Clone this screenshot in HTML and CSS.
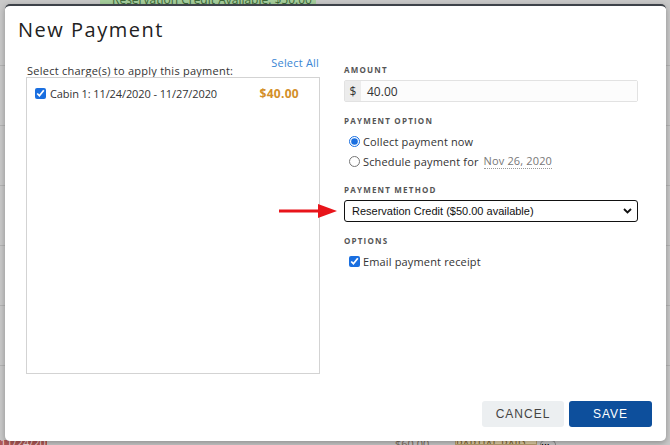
FILE: index.html
```html
<!DOCTYPE html>
<html>
<head>
<meta charset="utf-8">
<link rel="stylesheet" href="styles.css">
</head>
<body>
<div class="page">
  <div class="bg-top">
    <div class="credit-banner">Reservation Credit Available: $50.00</div>
  </div>
  <div class="bg-rows">
    <div class="bg-row"></div>
    <div class="bg-row"></div>
    <div class="bg-row"></div>
    <div class="bg-row"></div>
    <div class="bg-row"></div>
    <div class="bg-row"></div>
  </div>
  <div class="bg-bottom">
    <span class="red-badge">11/24/2020</span>
    <span class="bg-amount">$60.00</span>
    <span class="partial">PARTIAL PAID</span>
    <span class="dots">···</span>
  </div>

  <div class="modal">
    <h1 class="modal-title">New Payment</h1>
    <div class="modal-body">
      <div class="col-left">
        <div class="charges-head">
          <span class="charges-label">Select charge(s) to apply this payment:</span>
          <a class="select-all">Select All</a>
        </div>
        <div class="charges-box">
          <label class="charge">
            <input type="checkbox" class="cb" checked>
            <span class="charge-name">Cabin 1: 11/24/2020 - 11/27/2020</span>
            <span class="charge-amt">$40.00</span>
          </label>
        </div>
      </div>
      <div class="col-right">
        <div class="field">
          <div class="flabel">AMOUNT</div>
          <div class="input-group">
            <span class="addon">$</span>
            <span class="input">40.00</span>
          </div>
        </div>
        <div class="field">
          <div class="flabel">PAYMENT OPTION</div>
          <label class="opt"><input type="radio" name="po" class="rd" checked> Collect payment now</label>
          <label class="opt"><input type="radio" name="po" class="rd"> Schedule payment for <span class="date">Nov 26, 2020</span></label>
        </div>
        <div class="field">
          <div class="flabel">PAYMENT METHOD</div>
          <div class="select">
            <span>Reservation Credit ($50.00 available)</span>
            <svg class="chev" width="9" height="6" viewBox="0 0 9 6"><path d="M1 1 L4.5 4.5 L8 1" fill="none" stroke="#111" stroke-width="1.8"/></svg>
          </div>
        </div>
        <div class="field">
          <div class="flabel">OPTIONS</div>
          <label class="opt"><input type="checkbox" class="cb" checked> Email payment receipt</label>
        </div>
      </div>
    </div>
    <div class="modal-footer">
      <button class="btn cancel">CANCEL</button>
      <button class="btn save">SAVE</button>
    </div>
    <svg class="arrow" width="58" height="14" viewBox="0 0 58 14"><rect x="0" y="5.5" width="42" height="3" fill="#e8141a"/><polygon points="39,0 58,7 39,14" fill="#e8141a"/></svg>
  </div>
</div>
</body>
</html>
```
FILE: styles.css
```css
* { box-sizing: border-box; }
html, body { margin: 0; padding: 0; }
body { width: 670px; height: 445px; overflow: hidden; font-family: "Open Sans", sans-serif; }

.page { position: relative; width: 670px; height: 445px; background: #c9c9c9; overflow: hidden; }

.bg-top { height: 6px; position: relative; }
.credit-banner { margin-left: 100px; width: 216px; height: 10px; background: #a6cf9c; color: #3f6a3a; font-size: 12px; line-height: 0; padding: 0 12px; white-space: nowrap; overflow: hidden; }
.bg-rows { display: flex; flex-direction: column; }
.bg-row { height: 60px; border-bottom: 1px solid #b5b5b5; }
.bg-bottom { position: absolute; left: 0; right: 0; bottom: 0; height: 6px; display: flex; align-items: flex-end; font-size: 11px; line-height: 6px; }
.red-badge { background: #b05a58; color: #f3dede; width: 47px; height: 5px; overflow: hidden; }
.bg-amount { margin-left: 348px; color: #7a6a5a; width: 60px; height: 4px; overflow: hidden; }
.partial { margin-left: 0; background: #e0cfa6; border: 1px solid #b8a070; height: 5px; width: 82px; color: #7a6030; overflow: hidden; }
.dots { width: 16px; height: 5px; border: 1px solid #888; border-bottom: 0; border-radius: 8px 8px 0 0; margin-left: 3px; }

.modal { position: absolute; left: 5px; top: 4px; width: 661px; height: 437px; background: #fff; border-radius: 5px; border-top: 2px solid #3d4249; box-shadow: 0 2px 6px rgba(0,0,0,0.3); display: flex; flex-direction: column; }
.modal-title { margin: 0; font-weight: 400; font-size: 20px; line-height: 24px; color: #222; padding: 12px 0 0 13px; letter-spacing: 1.5px; }

.modal-body { display: flex; gap: 24px; padding: 21px 28px 0 21px; flex: 1; }
.col-left { width: 294px; display: flex; flex-direction: column; }
.charges-head { display: flex; justify-content: space-between; align-items: flex-end; padding: 0 1px 0 1px; }
.charges-label { font-size: 11px; color: #333; line-height: 14px; margin-bottom: -1px; letter-spacing: 0.25px; }
.select-all { font-size: 11px; color: #3a86d4; line-height: 14px; position: relative; top: -7px; letter-spacing: 0.2px; }
.charges-box { margin-top: 0; height: 297px; border: 1px solid #d3d3d3; padding: 7px 8px; }
.charge { display: flex; align-items: center; font-size: 11px; color: #333; }
.charge-name { margin-left: 4px; flex: 1; letter-spacing: -0.1px; }
.charge-amt { color: #d38f2a; font-weight: 700; font-size: 12px; margin-right: 12px; letter-spacing: 0.3px; }

.cb { width: 11px; height: 11px; margin: 0; accent-color: #1a6fe0; }
.rd { width: 11px; height: 11px; margin: 0; accent-color: #1a6fe0; }

.col-right { width: 294px; display: flex; flex-direction: column; padding-top: 2px; }
.field { margin-bottom: 14px; }
.flabel { font-size: 8px; font-weight: 700; letter-spacing: 1.2px; color: #555; line-height: 10px; margin-bottom: 5px; }
.input-group { display: flex; height: 22px; border: 1px solid #e2e2e2; border-radius: 2px; }
.addon { width: 16px; background: #ececec; font-size: 12px; color: #333; display: flex; align-items: center; justify-content: center; }
.input { flex: 1; font-size: 12px; color: #333; padding-left: 6px; display: flex; align-items: center; background: #fcfcfc; }

.opt { display: flex; align-items: center; font-size: 11px; color: #333; padding-left: 5px; height: 20px; gap: 3px; letter-spacing: 0.15px; }
.date { color: #777; border-bottom: 1px dotted #999; margin-left: 2px; line-height: 14px; }

.select { position: relative; height: 22px; border: 1.5px solid #111; border-radius: 3px; display: flex; align-items: center; padding-left: 7px; font-family: "Liberation Sans", Arial, sans-serif; font-size: 11px; color: #111; }
.chev { position: absolute; right: 5px; top: 7px; }

.modal-footer { display: flex; justify-content: flex-end; gap: 5px; padding: 0 14px 14px 0; }
.btn { height: 26px; border: 0; border-radius: 3px; font-family: "Liberation Sans", Arial, sans-serif; font-size: 12px; letter-spacing: 1px; cursor: pointer; }
.cancel { width: 82px; background: #eceff1; color: #444; }
.save { width: 83px; background: #0d4f9c; color: #fff; }

.arrow { position: absolute; left: 274px; top: 198px; }
```
